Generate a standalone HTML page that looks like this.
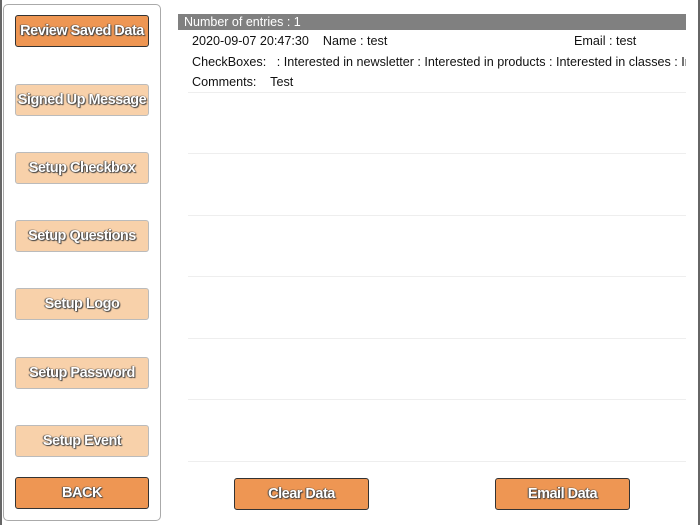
<!DOCTYPE html>
<html><head><style>
body{margin:0;width:700px;height:525px;background:#fff;position:relative;overflow:hidden;font-family:"Liberation Sans",sans-serif}
.lp{position:absolute;left:3px;top:4px;width:158px;height:517px;border:1px solid #aaa;border-radius:5px;box-sizing:border-box}
.edge{position:absolute;top:0;width:2px;height:525px;background:#666}
.b{position:absolute;left:15px;width:134px;height:32px;box-sizing:border-box;border-radius:3px;color:#fff;font-weight:bold;font-size:14.5px;letter-spacing:-0.5px;display:flex;align-items:center;justify-content:center;text-shadow:0 0 1px #333,1px 1px 1px #444,-1px 0 1px #555}
.d{background:#ee9653;border:1.5px solid #333}
.l{background:#f8d1aa;border:1px solid #bbb}
.hdr{position:absolute;left:178px;top:14px;width:508px;height:16px;background:#808080;color:#fff;font-size:12.5px;line-height:16px;padding-left:6px;box-sizing:border-box}
.t{position:absolute;font-size:12.6px;color:#111;white-space:nowrap}
.sep{position:absolute;left:188px;width:498px;height:1px;background:#eee}
</style></head><body>
<div class="edge" style="left:0"></div>
<div class="edge" style="left:698px"></div>
<div class="lp"></div>
<div class="b d" style="top:15px">Review Saved Data</div>
<div class="b l" style="top:84px">Signed Up Message</div>
<div class="b l" style="top:152px">Setup Checkbox</div>
<div class="b l" style="top:220px">Setup Questions</div>
<div class="b l" style="top:288px">Setup Logo</div>
<div class="b l" style="top:357px">Setup Password</div>
<div class="b l" style="top:425px">Setup Event</div>
<div class="b d" style="top:477px;width:134px">BACK</div>
<div class="b d" style="top:478px;left:234px;width:135px">Clear Data</div>
<div class="b d" style="top:478px;left:495px;width:135px">Email Data</div>
<div class="hdr">Number of entries : 1</div>
<div class="t" style="left:192px;top:34px">2020-09-07 20:47:30&nbsp;&nbsp;&nbsp; Name : test</div>
<div class="t" style="left:574px;top:34px">Email : test</div>
<div class="t" style="left:192px;top:55px;width:494px;overflow:hidden">CheckBoxes:&nbsp;&nbsp; : Interested in newsletter : Interested in products : Interested in classes : Interested</div>
<div class="t" style="left:192px;top:75px">Comments:&nbsp;&nbsp;&nbsp; Test</div>
<div class="sep" style="top:92px"></div>
<div class="sep" style="top:153px"></div>
<div class="sep" style="top:215px"></div>
<div class="sep" style="top:276px"></div>
<div class="sep" style="top:338px"></div>
<div class="sep" style="top:399px"></div>
<div class="sep" style="top:461px"></div>
</body></html>
